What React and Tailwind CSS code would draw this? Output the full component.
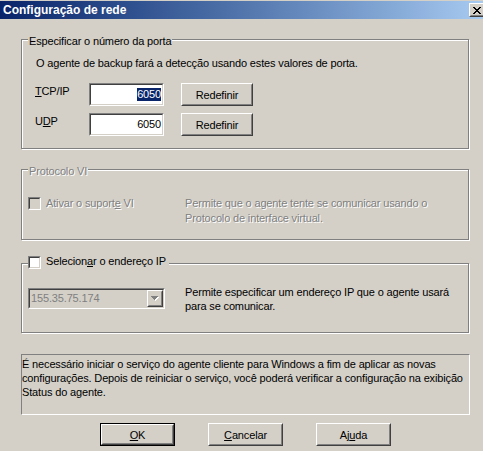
import React from "react";

function Sunken({ className = "", innerClass = "", children }) {
  return (
    <div className={`border border-t-[#808080] border-l-[#808080] border-b-white border-r-white ${className}`}>
      <div className={`w-full h-full border border-t-[#404040] border-l-[#404040] border-b-[#d4d0c8] border-r-[#d4d0c8] ${innerClass}`}>
        {children}
      </div>
    </div>
  );
}

function CheckBox({ disabled }) {
  return (
    <Sunken
      className="w-[13px] h-[13px] shrink-0"
      innerClass={disabled ? "bg-[#d4d0c8]" : "bg-white"}
    />
  );
}

function Raised({ className = "", innerClass = "", children }) {
  return (
    <div className={`border border-t-white border-l-white border-b-[#404040] border-r-[#404040] ${className}`}>
      <div className={`w-full h-full border border-t-[#d4d0c8] border-l-[#d4d0c8] border-b-[#808080] border-r-[#808080] ${innerClass}`}>
        {children}
      </div>
    </div>
  );
}

function Btn({ children, def, className = "" }) {
  if (def) {
    return (
      <div className={`border border-black ${className}`}>
        <Raised className="w-full h-full" innerClass="flex items-center justify-center">
          {children}
        </Raised>
      </div>
    );
  }
  return (
    <Raised className={className} innerClass="flex items-center justify-center">
      {children}
    </Raised>
  );
}

function GroupFrame({ className = "", children }) {
  return (
    <div
      className={`relative w-[448px] border border-[#808080] shadow-[1px_1px_0_#fff,inset_1px_1px_0_#fff] ${className}`}
    >
      {children}
    </div>
  );
}

const dis = "text-[#808080] [text-shadow:1px_1px_0_#fff]";

function CloseX() {
  const px = [
    [0, 0], [1, 0], [6, 0], [7, 0],
    [1, 1], [2, 1], [5, 1], [6, 1],
    [2, 2], [3, 2], [4, 2], [5, 2],
    [3, 3], [4, 3],
    [2, 4], [3, 4], [4, 4], [5, 4],
    [1, 5], [2, 5], [5, 5], [6, 5],
    [0, 6], [1, 6], [6, 6], [7, 6],
  ];
  return (
    <svg width="8" height="7" viewBox="0 0 8 7" shapeRendering="crispEdges">
      {px.map(([x, y], i) => (
        <rect key={i} x={x} y={y} width="1" height="1" fill="#000" />
      ))}
    </svg>
  );
}

function DownArrow() {
  return (
    <svg width="8" height="5" viewBox="0 0 8 5" shapeRendering="crispEdges">
      <rect x="1" y="1" width="7" height="1" fill="#fff" />
      <rect x="2" y="2" width="5" height="1" fill="#fff" />
      <rect x="3" y="3" width="3" height="1" fill="#fff" />
      <rect x="4" y="4" width="1" height="1" fill="#fff" />
      <rect x="0" y="0" width="7" height="1" fill="#808080" />
      <rect x="1" y="1" width="5" height="1" fill="#808080" />
      <rect x="2" y="2" width="3" height="1" fill="#808080" />
      <rect x="3" y="3" width="1" height="1" fill="#808080" />
    </svg>
  );
}

export default function App() {
  return (
    <div className="w-[483px] h-[451px] overflow-hidden bg-[#d4d0c8] text-black text-[11px] leading-[14px] tracking-[-0.15px] [font-family:'Liberation_Sans',Arial,sans-serif] flex flex-col whitespace-nowrap">
      <div className="h-px shrink-0 bg-[#d4d0c8]" />
      <div className="h-[18px] shrink-0 flex items-center bg-gradient-to-r from-[#0a246a] to-[#a6caf0] pl-[3px]">
        <div className="flex-1 text-white font-bold text-[12px] tracking-normal">Configuração de rede</div>
        <Raised className="w-[16px] h-[14px] mr-[-2px] bg-[#d4d0c8]" innerClass="flex items-center justify-center">
          <CloseX />
        </Raised>
      </div>

      <div className="flex flex-col pl-[21px]">
        {/* Group 1 */}
        <GroupFrame className="mt-[20px] h-[110px]">
          <div className="absolute left-[6px] top-[-6px] bg-[#d4d0c8] px-[1px]">
            Especificar o número da porta
          </div>
          <div className="pl-[14px] pt-[16px]">
            O agente de backup fará a detecção usando estes valores de porta.
          </div>
          <div className="flex items-start pl-[13px] mt-[13px]">
            <div className="w-[54px] mt-[1px]">
              <span className="underline">T</span>CP/IP
            </div>
            <Sunken className="w-[75px] h-[23px]" innerClass="bg-white flex items-center justify-end pr-[1px]">
              <span className="bg-[#0a246a] text-white leading-[13px]">6050</span>
            </Sunken>
            <Btn className="ml-[17px] w-[72px] h-[23px]">Redefinir</Btn>
          </div>
          <div className="flex items-start pl-[13px] mt-[7px]">
            <div className="w-[54px] mt-[1px]">
              U<span className="underline">D</span>P
            </div>
            <Sunken className="w-[75px] h-[23px]" innerClass="bg-white flex items-center justify-end pr-[1px]">
              <span className="leading-[13px]">6050</span>
            </Sunken>
            <Btn className="ml-[17px] w-[72px] h-[23px]">Redefinir</Btn>
          </div>
        </GroupFrame>

        {/* Group 2 */}
        <GroupFrame className="mt-[20px] h-[71px]">
          <div className={`absolute left-[6px] top-[-6px] bg-[#d4d0c8] px-[1px] ${dis}`}>
            Protocolo VI
          </div>
          <div className="flex items-start pl-[6px] pt-[26px]">
            <div className="mt-[1px]">
              <CheckBox disabled />
            </div>
            <div className={`ml-[5px] w-[139px] ${dis}`}>
              Ativar o suport<span className="underline">e</span> VI
            </div>
            <div className={dis}>
              <div>Permite que o agente tente se comunicar usando o</div>
              <div className="mt-[1px]">Protocolo de interface virtual.</div>
            </div>
          </div>
        </GroupFrame>

        {/* Group 3 */}
        <GroupFrame className="mt-[23px] h-[70px]">
          <div className="absolute left-[6px] top-[-10px] bg-[#d4d0c8] flex items-start pr-[3px]">
            <div className="mt-[2px]">
              <CheckBox />
            </div>
            <div className="ml-[5px]">
              Selecion<span className="underline">a</span>r o endereço IP
            </div>
          </div>
          <div className="flex items-start pl-[6px] pt-[21px]">
            <Sunken className="mt-[3px] w-[137px] h-[21px]" innerClass="bg-[#d4d0c8] flex items-center">
              <div className="flex-1 pl-[1px] text-[#808080] leading-[13px]">155.35.75.174</div>
              <Raised className="w-[16px] h-full" innerClass="flex items-center justify-center">
                <DownArrow />
              </Raised>
            </Sunken>
            <div className="ml-[20px]">
              <div>Permite especificar um endereço IP que o agente usará</div>
              <div>para se comunicar.</div>
            </div>
          </div>
        </GroupFrame>

        {/* Message */}
        <div className="mt-[21px] w-[449px] h-[61px] border border-t-[#808080] border-l-[#808080] border-b-white border-r-white pt-[2px] overflow-hidden">
          <div>É necessário iniciar o serviço do agente cliente para Windows a fim de aplicar as novas</div>
          <div>configurações. Depois de reiniciar o serviço, você poderá verificar a configuração na exibição</div>
          <div>Status do agente.</div>
        </div>

        {/* Buttons */}
        <div className="flex pl-[79px] mt-[8px] gap-[33px]">
          <Btn def className="w-[75px] h-[23px]">
            <span>
              <span className="underline">O</span>K
            </span>
          </Btn>
          <Btn className="w-[75px] h-[23px]">
            <span>
              <span className="underline">C</span>ancelar
            </span>
          </Btn>
          <Btn className="w-[75px] h-[23px]">
            <span>
              Aj<span className="underline">u</span>da
            </span>
          </Btn>
        </div>
      </div>
    </div>
  );
}
